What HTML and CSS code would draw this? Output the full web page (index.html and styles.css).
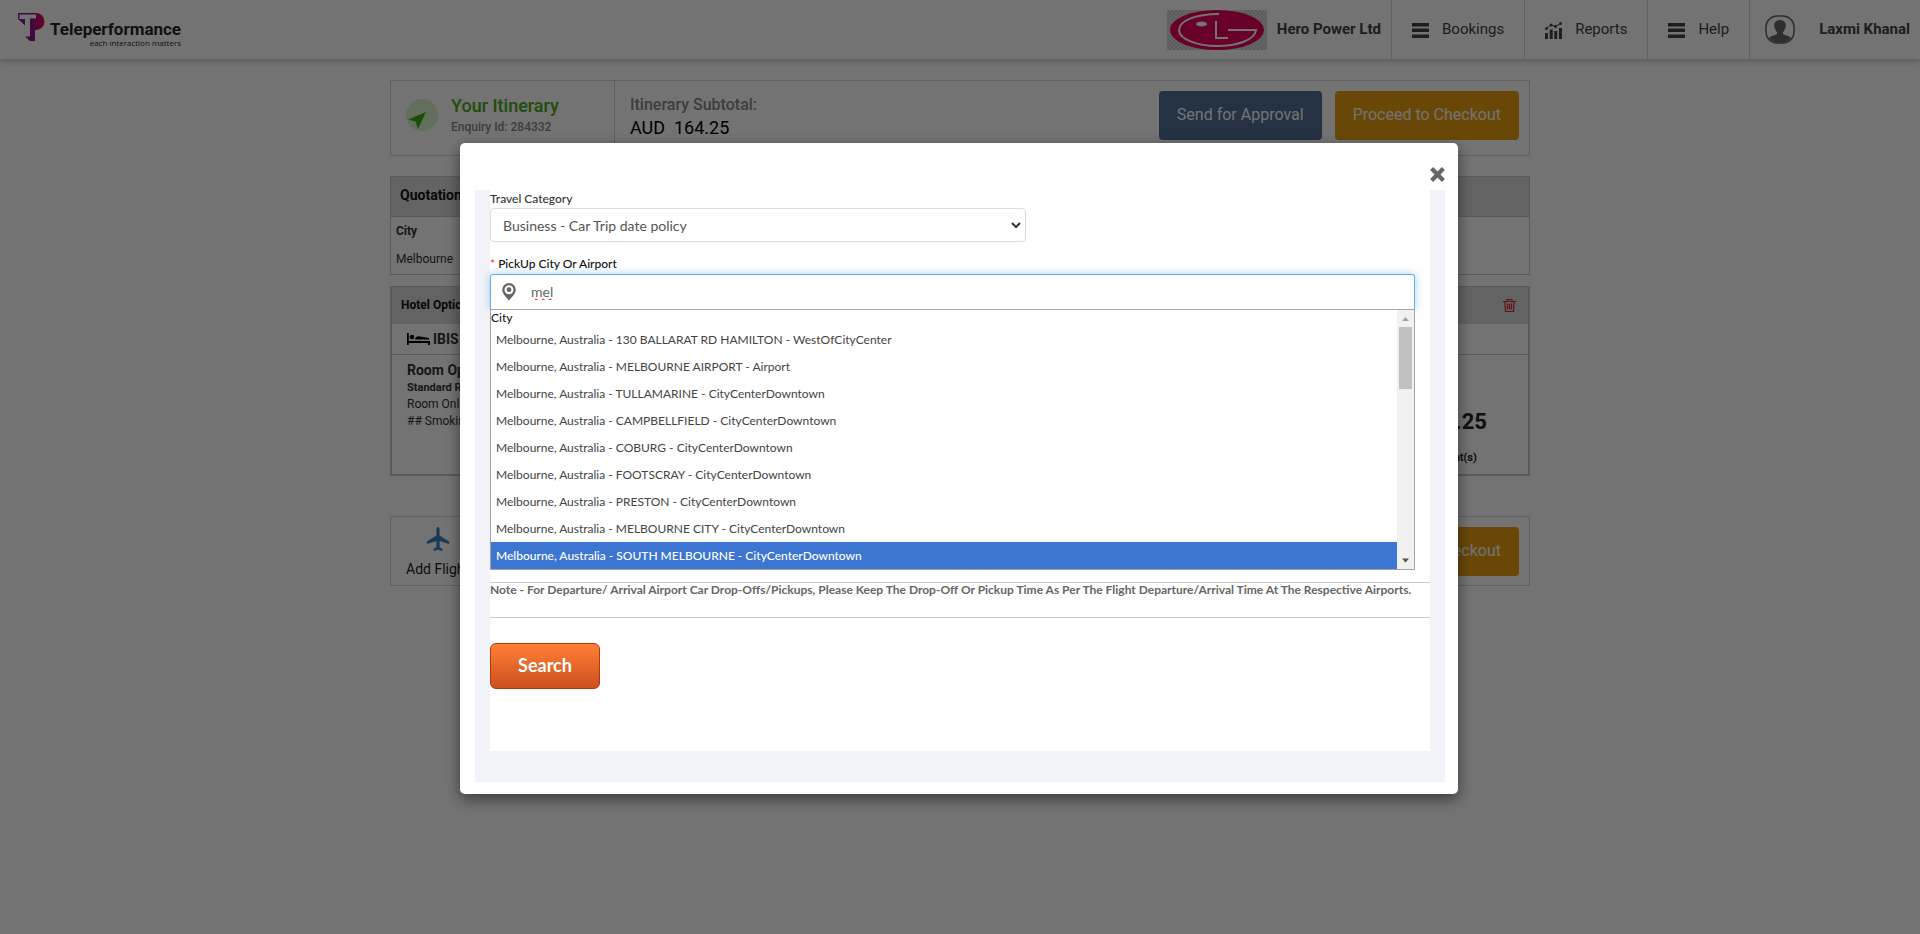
FILE: index.html
```html
<!DOCTYPE html>
<html lang="en">
<head>
<meta charset="utf-8">
<title>Your Itinerary</title>
<link rel="stylesheet" href="styles.css">
</head>
<body>
<header class="topbar">
  <a class="brand" href="#">
    <svg class="brand-mark" viewBox="0 0 28 29" aria-hidden="true">
      <defs><linearGradient id="tp" x1="0" x2="1" y1="0" y2="0"><stop offset="0" stop-color="#7a2a9e"/><stop offset=".5" stop-color="#8c1487"/><stop offset="1" stop-color="#f0045c"/></linearGradient></defs>
      <path fill="url(#tp)" d="M0 0H18A8.500 8.500 0 0 1 18 17H17V28H12L7 23.500H12V5.500H18V1.500H1.500V6H7V12.500L0 6Z"/>
    </svg>
    <span class="brand-text"><span class="brand-name">Teleperformance</span><span class="brand-tag">each interaction matters</span></span>
  </a>
  <div class="company">
    <svg class="company-logo" viewBox="0 0 100 40" aria-hidden="true">
      <defs><pattern id="ck" width="4" height="4" patternUnits="userSpaceOnUse"><rect width="4" height="4" fill="#e0e0e0"/><path fill="#cfcfcf" d="M0 0H2V2H0ZM2 2H4V4H2Z"/></pattern></defs>
      <rect width="100" height="40" fill="url(#ck)"/>
      <ellipse cx="50" cy="20" rx="47" ry="20" fill="#e6005c"/>
      <path d="M52 4C28 4 12 11 12 20S30 36 50 36 88 30 89 20H61" fill="none" stroke="#fff" stroke-width="2"/>
      <path d="M49 11V28H61" fill="none" stroke="#fff" stroke-width="2"/>
      <ellipse cx="34.500" cy="14" rx="5.500" ry="2.500" fill="#fff"/>
    </svg>
    <strong>Hero Power Ltd</strong>
  </div>
  <nav class="menu">
    <a href="#"><svg class="menu-icon" viewBox="0 0 17 17" aria-hidden="true"><path d="M0 1H17V4.500H0ZM0 6.500H17V10H0ZM0 12.500H17V16H0Z"/></svg>Bookings</a>
    <a href="#"><svg class="menu-icon" viewBox="0 0 17 17" aria-hidden="true"><path d="M0 11H3V17H0ZM4.700 7.500H7.700V17H4.700ZM9.300 9H12.300V17H9.300ZM14 6H17V17H14Z"/><path d="M1.500 6.500 6 3 10.500 4.500 15.500 1.500" fill="none" stroke="#3e4447"/><circle cx="1.500" cy="6.500" r="1.500"/><circle cx="6" cy="3" r="1.500"/><circle cx="10.500" cy="4.500" r="1.500"/><circle cx="15.500" cy="1.500" r="1.500"/></svg>Reports</a>
    <a href="#"><svg class="menu-icon" viewBox="0 0 17 17" aria-hidden="true"><path d="M0 1H17V4.500H0ZM0 6.500H17V10H0ZM0 12.500H17V16H0Z"/></svg>Help</a>
  </nav>
  <a class="user" href="#">
    <svg class="avatar" viewBox="0 0 30 30" aria-hidden="true"><rect x="1" y="1" width="28" height="27" rx="11" fill="none" stroke="#666" stroke-width="1.500"/><path fill="#666" d="M15 5C18.500 5 21 7.500 20.800 11 20.500 14 19 16 18 17.200V19C20 20.500 24 20.500 26 23Q22 28 15 28T4 23C6 20.500 10 20.500 12 19V17.200C11 16 9.500 14 9.200 11 9 7.500 11.500 5 15 5Z"/></svg>
    <strong>Laxmi Khanal</strong>
  </a>
</header>

<main class="page">
  <section class="panel summary">
    <div class="summary-title">
      <svg class="nav-icon" viewBox="0 0 32 32" aria-hidden="true"><circle cx="16" cy="16" r="16" fill="#d7f5cc"/><path d="M20 13 2 20.500 9.500 22.500 12 30Z" fill="#3fae10"/></svg>
      <div><h1>Your Itinerary</h1><p>Enquiry Id: 284332</p></div>
    </div>
    <div class="summary-total"><p>Itinerary Subtotal:</p><b>AUD&nbsp; 164.25</b></div>
    <div class="actions">
      <button class="btn btn-blue" type="button">Send for Approval</button>
      <button class="btn btn-gold" type="button">Proceed to Checkout</button>
    </div>
  </section>

  <table class="panel quotation">
    <thead><tr><th>Quotation</th></tr></thead>
    <tbody><tr><td><b>City</b></td></tr><tr><td>Melbourne</td></tr></tbody>
  </table>

  <section class="panel hotel">
    <div class="hotel-head"><h2>Hotel Options</h2>
      <button class="trash" type="button" aria-label="Delete"><svg viewBox="0 0 13 13" aria-hidden="true"><path d="M0 2.500H13M4 2.500V.5H9V2.500M1.800 2.500 2.500 12.500H10.500L11.200 2.500M4.500 4.500V10.500M6.500 4.500V10.500M8.500 4.500V10.500" fill="none" stroke="#d52b2b" stroke-width="1.200"/></svg></button>
    </div>
    <h3 class="hotel-name"><svg viewBox="0 0 23 12" aria-hidden="true"><path d="M0 0H1.800V8H23V12H21.200V10H1.800V12H0Z"/><circle cx="5" cy="4" r="2.300"/><path d="M8 6.500Q9 2.500 13 3.500L22 5V6.500Z"/></svg>IBIS</h3>
    <div class="hotel-body">
      <div><h3>Room Options</h3><b>Standard Room</b><p>Room Only</p><p>## Smoking</p></div>
      <div class="price"><strong>164.25</strong><b>1 Night(s)</b></div>
    </div>
  </section>

  <section class="panel footer-bar">
    <a class="add" href="#"><svg viewBox="0 0 24 24" aria-hidden="true"><path fill="#3a80c0" d="M12 0C13 0 13.600 1 13.600 2.500V8.500L23 14.500V17L13.600 14V20L16.500 22V24L12 22.800 7.500 24V22L10.400 20V14L1 17V14.500L10.400 8.500V2.500C10.400 1 11 0 12 0Z"/></svg>Add Flight</a>
    <button class="btn btn-gold" type="button">Proceed to Checkout</button>
  </section>
</main>

<div class="overlay">
  <div class="modal" role="dialog" aria-label="Car search">
    <button class="close" type="button" aria-label="Close"><svg viewBox="0 0 14 14" aria-hidden="true"><path d="M1.500 1.500 12.500 12.500M12.500 1.500 1.500 12.500" stroke="#666" stroke-width="4"/></svg></button>
    <div class="frame">
      <form class="search-form">
        <label for="category">Travel Category</label>
        <div class="select-wrap">
          <select id="category"><option>Business - Car Trip date policy</option></select>
          <svg viewBox="0 0 10 7" aria-hidden="true"><path d="M1 1 5 5 9 1" fill="none" stroke="#333" stroke-width="2"/></svg>
        </div>
        <label class="strong" for="pickup"><i>*</i> PickUp City Or Airport</label>
        <div class="field">
          <svg viewBox="0 0 14 18" aria-hidden="true"><path fill="#666" fill-rule="evenodd" d="M7 0A6.800 6.800 0 0 1 13.800 6.800C13.800 11 9 15 7 17.500 5 15 .2 11 .2 6.800A6.800 6.800 0 0 1 7 0ZM7 2.200A4.500 4.500 0 1 0 7 11.200 4.500 4.500 0 1 0 7 2.200Z"/><circle cx="7" cy="6.700" r="2.400" fill="#666"/></svg>
          <input id="pickup" type="text" value="mel">
        </div>
        <div class="results">
          <div class="results-list">
            <div class="group">City</div>
            <ul>
              <li>Melbourne, Australia - 130 BALLARAT RD HAMILTON - WestOfCityCenter</li>
              <li>Melbourne, Australia - MELBOURNE AIRPORT - Airport</li>
              <li>Melbourne, Australia - TULLAMARINE - CityCenterDowntown</li>
              <li>Melbourne, Australia - CAMPBELLFIELD - CityCenterDowntown</li>
              <li>Melbourne, Australia - COBURG - CityCenterDowntown</li>
              <li>Melbourne, Australia - FOOTSCRAY - CityCenterDowntown</li>
              <li>Melbourne, Australia - PRESTON - CityCenterDowntown</li>
              <li>Melbourne, Australia - MELBOURNE CITY - CityCenterDowntown</li>
              <li class="active">Melbourne, Australia - SOUTH MELBOURNE - CityCenterDowntown</li>
            </ul>
          </div>
          <div class="scrollbar" aria-hidden="true">
            <svg viewBox="0 0 17 17"><path fill="#a3a3a3" d="M5 11 8.500 7 12 11Z"/></svg>
            <span class="thumb"></span>
            <svg viewBox="0 0 17 17"><path fill="#505050" d="M5 6.500 8.500 10.500 12 6.500Z"/></svg>
          </div>
        </div>
        <p class="note">Note - For Departure/ Arrival Airport Car Drop-Offs/Pickups, Please Keep The Drop-Off Or Pickup Time As Per The Flight Departure/Arrival Time At The Respective Airports.</p>
        <button class="search" type="submit">Search</button>
      </form>
    </div>
  </div>
</div>
</body>
</html>
```
FILE: styles.css
```css
* { box-sizing: border-box; }
body { margin: 0; background: #fff; color: #333; font: 12px/17px Roboto, sans-serif; }
h1, h2, h3, p, ul { margin: 0; padding: 0; }
a { color: inherit; text-decoration: none; }
button, input, select { font-family: inherit; }
svg { display: block; flex: none; }

.topbar { display: flex; align-items: stretch; height: 60px; border-bottom: 1px solid #ddd; box-shadow: 0 2px 5px rgba(0, 0, 0, .2); font-size: 15px; color: #3e4447; }
.brand { display: flex; gap: 4px; padding: 13px 0 0 18px; margin-right: auto; }
.brand-mark { width: 28px; height: 29px; }
.brand-text { display: flex; flex-direction: column; align-items: flex-end; padding-top: 7px; color: #2b2523; }
.brand-name { font: bold 17px/18px Roboto, sans-serif; }
.brand-tag { font: 8px/10px "Open Sans", sans-serif; }
.company { display: flex; align-items: center; gap: 10px; padding-right: 10px; }
.company strong, .user strong { font-weight: 700; }
.company-logo { width: 100px; height: 40px; }
.menu { display: flex; }
.menu a { display: flex; align-items: center; gap: 13px; padding: 0 20px; border-left: 1px solid #d4d4d4; }
.menu-icon { width: 17px; height: 17px; margin-top: 2px; fill: #3e4447; }
.user { display: flex; align-items: center; gap: 24px; padding: 0 10px 0 15px; border-left: 1px solid #d4d4d4; }
.avatar { width: 30px; height: 30px; }

.page { max-width: 1140px; margin: 20px auto 0; }
.panel { border: 1px solid #d4d4d4; }
.btn { height: 49px; padding: 0 18px 2px; border: 0; border-radius: 4px; color: #fff; font-size: 16px; }
.btn-blue { background: #506f97; }
.btn-gold { background: #e8a010; }

.summary { display: flex; min-height: 76px; }
.summary-title { display: flex; gap: 13px; width: 224px; padding: 15px 15px 0; border-right: 1px solid #d4d4d4; }
.nav-icon { width: 32px; height: 32px; margin-top: 3px; }
.summary-title h1 { font-size: 18px; line-height: 20px; font-weight: 500; color: #4aa81c; }
.summary-title p { line-height: 22px; font-weight: 500; color: #888; }
.summary-total { padding: 13px 15px 0; font-size: 16px; }
.summary-total p { line-height: 22px; font-weight: 500; color: #888; }
.summary-total b { font-size: 18px; line-height: 24px; font-weight: 400; color: #000; }
.actions { display: flex; gap: 13px; margin-left: auto; padding: 10px 10px 0 0; }

.quotation { width: 100%; margin-top: 20px; border-collapse: collapse; border-color: #c8c8c8; }
.quotation th { height: 40px; padding: 0 9px 2px; background: #dcdcdc; border-bottom: 1px solid #c8c8c8; font-size: 14px; font-weight: 700; text-align: left; color: #111; }
.quotation td { height: 29px; padding: 0 5px; }
.quotation b { font-weight: 700; }

.hotel { margin-top: 11px; min-height: 190px; border: 2px solid #c8c8c8; border-top-width: 1px; }
.hotel-head { display: flex; align-items: center; justify-content: space-between; height: 37px; padding: 0 12px 0 9px; background: #dcdcdc; }
.hotel-head h2 { font-size: 12px; font-weight: 700; color: #111; }
.trash { padding: 0; border: 0; background: none; }
.trash svg { width: 13px; height: 13px; }
.hotel-name { display: flex; align-items: center; gap: 3px; height: 31px; padding-left: 15px; border-bottom: 1px solid #c8c8c8; font-size: 14px; font-weight: 700; }
.hotel-name svg { width: 23px; height: 12px; fill: #000; }
.hotel-body { display: flex; justify-content: space-between; padding: 6px 15px; }
.hotel-body h3 { font-size: 14px; line-height: 18px; font-weight: 700; }
.hotel-body b { font-size: 11px; line-height: 17px; }
.price { display: flex; flex-direction: column; align-items: center; gap: 14px; padding: 48px 26px 0 0; color: #222; }
.price strong { font-size: 22px; line-height: 26px; }

.footer-bar { display: flex; justify-content: space-between; align-items: flex-start; margin-top: 40px; padding: 10px 10px 7px 15px; }
.add { display: flex; flex-direction: column; align-items: center; gap: 10px; font-size: 14px; line-height: 17px; color: #222; }
.add svg { width: 24px; height: 24px; }

.overlay { position: fixed; inset: 0; padding: 143px 22px 0 20px; background: rgba(0, 0, 0, .55); }
.modal { max-width: 998px; margin: 0 auto; padding: 24px 13px 12px 15px; border-radius: 5px; background: #fff; box-shadow: 0 5px 15px rgba(0, 0, 0, .5); font-family: Lato, sans-serif; }
.close { display: block; margin: 0 0 8px auto; padding: 0; border: 0; background: none; }
.close svg { width: 15px; height: 15px; }
.frame { padding: 0 15px 31px; background: #f2f3f8; }
.search-form { padding-bottom: 62px; background: #fff; }
.search-form label { display: block; padding-bottom: 1px; font-size: 12px; line-height: 17px; font-weight: 500; }
.search-form .strong { margin-top: 13px; padding-bottom: 2px; color: #111; }
.search-form i { color: #f33; font-style: normal; }
.select-wrap { position: relative; width: 57%; }
.select-wrap select { width: 100%; height: 34px; padding: 0 12px; border: 1px solid #dcdcdc; border-radius: 4px; appearance: none; background: #fff; color: #555; font-size: 14px; }
.select-wrap svg { position: absolute; right: 5px; top: 14px; width: 10px; height: 7px; }
.field { display: flex; align-items: center; gap: 15px; height: 35px; margin-right: 15px; padding: 0 11px; border: 1px solid #66afe9; border-bottom-width: 0; border-radius: 3px 3px 0 0; box-shadow: 0 0 8px rgba(102, 175, 233, .6); }
.field svg { width: 14px; height: 18px; }
.field input { flex: 1; padding: 0 0 2px; border: 0; outline: 0; color: #666; font-size: 14px; text-decoration: underline wavy #f00 1px; text-decoration-skip-ink: none; }
.results { display: flex; position: relative; margin-right: 15px; border: 1px solid #a0a6ac; background: #fff; }
.results-list { flex: 1; }
.group { line-height: 16px; font-weight: 500; color: #222; }
.results ul { list-style: none; }
.results li { padding: 0 5px; line-height: 27px; color: #444; }
.results .active { background: #3c76d2; color: #fff; font-weight: 500; }
.scrollbar { display: flex; flex-direction: column; justify-content: space-between; width: 17px; background: #f1f1f1; }
.scrollbar svg { width: 17px; height: 17px; }
.thumb { height: 62px; margin: 0 2px auto; background: #c1c1c1; }
.note { margin: 12px 0 25px; padding-bottom: 20px; border: solid #ccc; border-width: 1px 0; line-height: 14px; font-weight: 700; color: #666; }
.search { width: 110px; height: 46px; padding: 0 0 3px; border: 1px solid #b93408; border-radius: 6px; background: linear-gradient(#ff8035, #ca5020); color: #fff; font-size: 18px; font-weight: 700; }
```
